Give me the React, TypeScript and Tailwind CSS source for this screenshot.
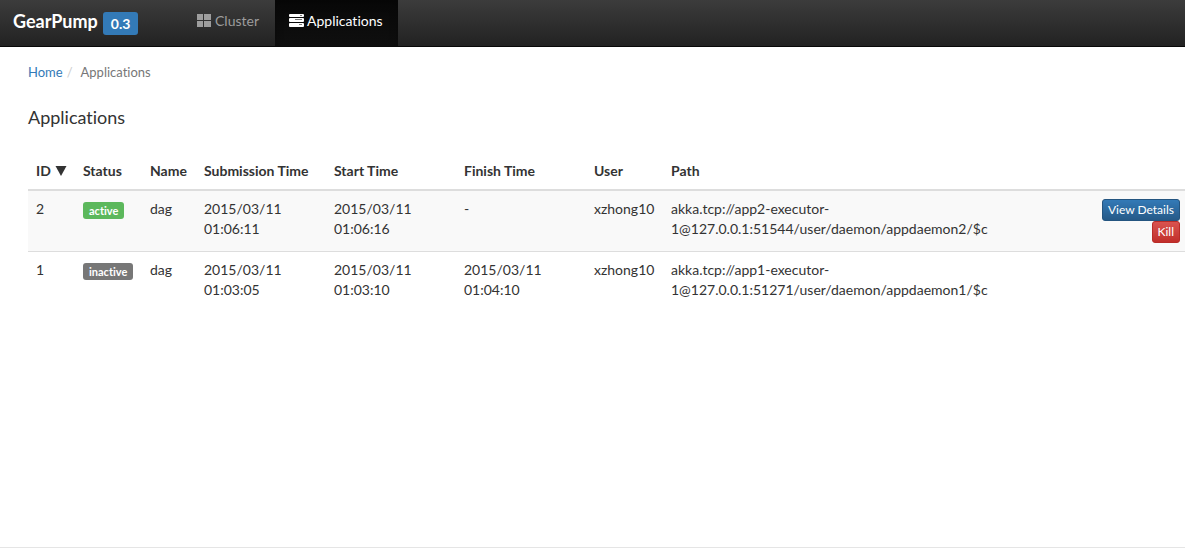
import React from "react";

type App = {
  id: number;
  active: boolean;
  name: string;
  submitted: string;
  started: string;
  finished: string;
  user: string;
  path: string;
};

const apps: App[] = [
  {
    id: 2,
    active: true,
    name: "dag",
    submitted: "2015/03/11 01:06:11",
    started: "2015/03/11 01:06:16",
    finished: "-",
    user: "xzhong10",
    path: "akka.tcp://app2-executor-1@127.0.0.1:51544/user/daemon/appdaemon2/$c",
  },
  {
    id: 1,
    active: false,
    name: "dag",
    submitted: "2015/03/11 01:03:05",
    started: "2015/03/11 01:03:10",
    finished: "2015/03/11 01:04:10",
    user: "xzhong10",
    path: "akka.tcp://app1-executor-1@127.0.0.1:51271/user/daemon/appdaemon1/$c",
  },
];

function GridIcon() {
  return (
    <svg className="h-[14px] w-[14px]" viewBox="0 0 14 14" fill="currentColor" aria-hidden="true">
      <path d="M0 0h6v6H0zM7 0h7v6H7zM0 7h6v6H0zM7 7h7v6H7z" />
    </svg>
  );
}

function ServerIcon() {
  return (
    <svg className="h-[14px] w-[15px]" viewBox="0 0 15 14" aria-hidden="true">
      <g fill="#fff">
        <rect x="0" y="0" width="15" height="3" rx="1" />
        <rect x="0" y="4" width="15" height="4" rx="1" />
        <rect x="0" y="9" width="15" height="4" rx="1" />
      </g>
      <path d="M11 1h2v1h-2zM6 5h7v1H6zM10 10h3v1h-3z" fill="#777" />
    </svg>
  );
}

export default function App() {
  return (
    <div className="flex min-h-screen flex-col bg-white font-['Lato',sans-serif] text-sm leading-5 text-[#333] [font-variant-ligatures:none]">
      <nav className="flex h-[47px] shrink-0 items-stretch border-b border-[#080808] bg-linear-to-b from-[#3c3c3c] to-[#222]">
        <a href="#home" className="flex w-[181px] items-center pb-1 pl-[13px] text-lg font-bold text-white">
          GearPump
          <span className="mt-1 ml-[5px] rounded-[3px] bg-[#337ab7] px-2 py-px text-sm leading-[21px]">0.3</span>
        </a>
        <a href="#cluster" className="flex items-center gap-1 px-4 pb-1 text-[#9d9d9d]">
          <GridIcon />
          Cluster
        </a>
        <a
          href="#applications"
          className="flex items-center gap-[3px] bg-linear-to-b from-[#080808] to-[#0f0f0f] pr-[15px] pb-1 pl-[14px] text-white shadow-[inset_0_3px_9px_rgba(0,0,0,0.25)]"
        >
          <ServerIcon />
          Applications
        </a>
      </nav>

      <main className="flex-1 pl-7">
        <ol className="flex pt-[15px] text-[13px] text-[#777]">
          <li>
            <a href="#home" className="text-[#337ab7]">Home</a>
            <span className="px-1 text-[#ccc]">/</span>
          </li>
          <li className="pl-1">Applications</li>
        </ol>
        <h1 className="mt-[25px] text-lg leading-5">Applications</h1>

        <table className="mt-[26px] w-full table-fixed border-collapse text-left">
          <colgroup>
            <col className="w-[47px]" />
            <col className="w-[67px]" />
            <col className="w-[54px]" />
            <col className="w-[130px]" />
            <col className="w-[130px]" />
            <col className="w-[130px]" />
            <col className="w-[77px]" />
            <col />
            <col className="w-[100px]" />
          </colgroup>
          <thead>
            <tr className="border-b-2 border-[#ddd] whitespace-nowrap">
              <th className="p-2">
                <span className="flex items-center gap-1">
                  ID
                  <svg className="h-[10px] w-3" viewBox="0 0 12 10" fill="currentColor" aria-hidden="true">
                    <path d="M0.5 0h11L6 10z" />
                  </svg>
                </span>
              </th>
              <th className="p-2">Status</th>
              <th className="p-2">Name</th>
              <th className="p-2">Submission Time</th>
              <th className="p-2">Start Time</th>
              <th className="p-2">Finish Time</th>
              <th className="p-2">User</th>
              <th className="p-2">Path</th>
              <td />
            </tr>
          </thead>
          <tbody>
            {apps.map((app) => (
              <tr key={app.id} className="border-t border-[#ddd] align-top odd:bg-[#f9f9f9]">
                <td className="p-2">{app.id}</td>
                <td className="p-2">
                  <span
                    className={`mt-[3px] block w-fit rounded-[3px] px-[6px] text-[11px] leading-[17px] font-bold text-white ${
                      app.active ? "bg-[#5cb85c]" : "bg-[#777]"
                    }`}
                  >
                    {app.active ? "active" : "inactive"}
                  </span>
                </td>
                <td className="p-2">{app.name}</td>
                <td className="py-2 pr-10 pl-2">{app.submitted}</td>
                <td className="py-2 pr-10 pl-2">{app.started}</td>
                <td className="py-2 pr-10 pl-2">{app.finished}</td>
                <td className="p-2">{app.user}</td>
                <td className="p-2">
                  <div className="max-w-[320px]">{app.path}</div>
                </td>
                <td className="py-2 pr-[5px]">
                  {app.active && (
                    <div className="flex flex-col items-end text-xs leading-5 text-white">
                      <button className="rounded-[3px] border border-[#245580] bg-linear-to-b from-[#337ab7] to-[#265a88] px-[5px]">
                        View Details
                      </button>
                      <button className="rounded-[3px] border border-[#b92c28] bg-linear-to-b from-[#d9534f] to-[#c12e2a] px-[5px]">
                        Kill
                      </button>
                    </div>
                  )}
                </td>
              </tr>
            ))}
          </tbody>
        </table>
      </main>

      <footer className="h-[3px] border-t border-[#e5e5e5] bg-white" />
    </div>
  );
}
